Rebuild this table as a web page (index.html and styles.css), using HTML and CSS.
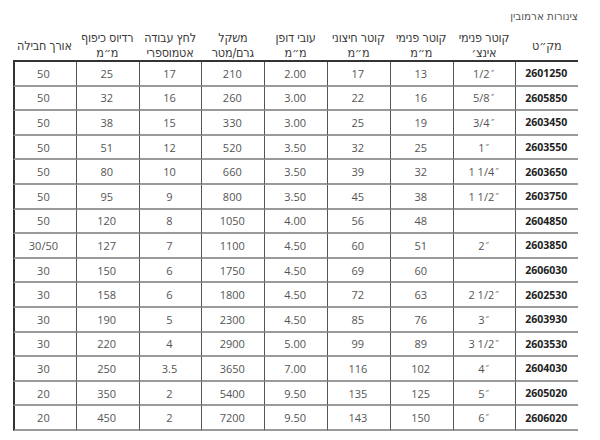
FILE: index.html
```html
<!DOCTYPE html>
<html lang="he">
<head>
<meta charset="utf-8">
<link rel="stylesheet" href="styles.css">
</head>
<body>
<div class="page">
  <div class="title">צינורות ארמובין</div>
  <table class="spec" dir="rtl">
    <colgroup>
      <col><col><col><col><col><col><col><col><col>
    </colgroup>
    <thead>
      <tr>
        <th>מק״ט</th>
        <th>קוטר פנימי<br>אינצ׳</th>
        <th>קוטר פנימי<br>מ״מ</th>
        <th>קוטר חיצוני<br>מ״מ</th>
        <th>עובי דופן<br>מ״מ</th>
        <th>משקל<br>גרם/מטר</th>
        <th>לחץ עבודה<br>אטמוספרי</th>
        <th>רדיוס כיפוף<br>מ״מ</th>
        <th>אורך חבילה</th>
      </tr>
    </thead>
    <tbody>
      <tr><td class="sku">2601250</td><td>1/2<sup>″</sup></td><td>13</td><td>17</td><td>2.00</td><td>210</td><td>17</td><td>25</td><td>50</td></tr>
      <tr><td class="sku">2605850</td><td>5/8<sup>″</sup></td><td>16</td><td>22</td><td>3.00</td><td>260</td><td>16</td><td>32</td><td>50</td></tr>
      <tr><td class="sku">2603450</td><td>3/4<sup>″</sup></td><td>19</td><td>25</td><td>3.00</td><td>330</td><td>15</td><td>38</td><td>50</td></tr>
      <tr><td class="sku">2603550</td><td>1<sup>″</sup></td><td>25</td><td>32</td><td>3.50</td><td>520</td><td>12</td><td>51</td><td>50</td></tr>
      <tr><td class="sku">2603650</td><td>1 1/4<sup>″</sup></td><td>32</td><td>39</td><td>3.50</td><td>660</td><td>10</td><td>80</td><td>50</td></tr>
      <tr><td class="sku">2603750</td><td>1 1/2<sup>″</sup></td><td>38</td><td>45</td><td>3.50</td><td>800</td><td>9</td><td>95</td><td>50</td></tr>
      <tr><td class="sku">2604850</td><td></td><td>48</td><td>56</td><td>4.00</td><td>1050</td><td>8</td><td>120</td><td>50</td></tr>
      <tr><td class="sku">2603850</td><td>2<sup>″</sup></td><td>51</td><td>60</td><td>4.50</td><td>1100</td><td>7</td><td>127</td><td>30/50</td></tr>
      <tr><td class="sku">2606030</td><td></td><td>60</td><td>69</td><td>4.50</td><td>1750</td><td>6</td><td>150</td><td>30</td></tr>
      <tr><td class="sku">2602530</td><td>2 1/2<sup>″</sup></td><td>63</td><td>72</td><td>4.50</td><td>1800</td><td>6</td><td>158</td><td>30</td></tr>
      <tr><td class="sku">2603930</td><td>3<sup>″</sup></td><td>76</td><td>85</td><td>4.50</td><td>2300</td><td>5</td><td>190</td><td>30</td></tr>
      <tr><td class="sku">2603530</td><td>3 1/2<sup>″</sup></td><td>89</td><td>99</td><td>5.00</td><td>2900</td><td>4</td><td>220</td><td>30</td></tr>
      <tr><td class="sku">2604030</td><td>4<sup>″</sup></td><td>102</td><td>116</td><td>7.00</td><td>3650</td><td>3.5</td><td>250</td><td>30</td></tr>
      <tr><td class="sku">2605020</td><td>5<sup>″</sup></td><td>125</td><td>135</td><td>9.50</td><td>5400</td><td>2</td><td>350</td><td>20</td></tr>
      <tr><td class="sku">2606020</td><td>6<sup>″</sup></td><td>150</td><td>143</td><td>9.50</td><td>7200</td><td>2</td><td>450</td><td>20</td></tr>
    </tbody>
  </table>
</div>
</body>
</html>
```

FILE: styles.css
```css
html, body {
  margin: 0;
  padding: 0;
  background: #ffffff;
}

.page {
  width: 565px;
  padding: 6px 0 0 13px;
  font-family: "Open Sans", "Liberation Sans", sans-serif;
}

.title {
  direction: rtl;
  text-align: right;
  font-size: 11.5px;
  line-height: 20px;
  height: 20px;
  color: #555;
  font-family: "Liberation Sans Narrow", "DejaVu Sans Condensed", "Liberation Sans", sans-serif;
  font-stretch: condensed;
}

.spec {
  width: 565px;
  table-layout: fixed;
  border-collapse: separate;
  border-spacing: 0;
}

.spec col {
  width: 62.8px;
}

.spec th {
  font-family: "Liberation Sans Narrow", "DejaVu Sans Condensed", "Liberation Sans", sans-serif;
  font-stretch: condensed;
  font-weight: normal;
  font-size: 12.5px;
  letter-spacing: -0.2px;
  line-height: 15px;
  color: #3a3a3a;
  height: 27px;
  padding: 4px 0 0 0;
  vertical-align: middle;
  text-align: center;
  white-space: nowrap;
  border-bottom: 2px solid #333;
}

.spec td {
  direction: ltr;
  text-align: center;
  font-size: 11px;
  color: #555;
  height: 22.6px;
  padding: 0;
  border-bottom: 2px solid #9a9a9a;
  border-left: 1px solid #555;
  vertical-align: middle;
}

.spec td:last-child {
  border-left: 2px solid #333;
}

.spec td.sku {
  font-weight: bold;
  color: #222;
  font-size: 10.5px;
}

.spec sup {
  font-size: 8px;
  line-height: 0;
  vertical-align: 3px;
  margin-left: 1px;
}
```
